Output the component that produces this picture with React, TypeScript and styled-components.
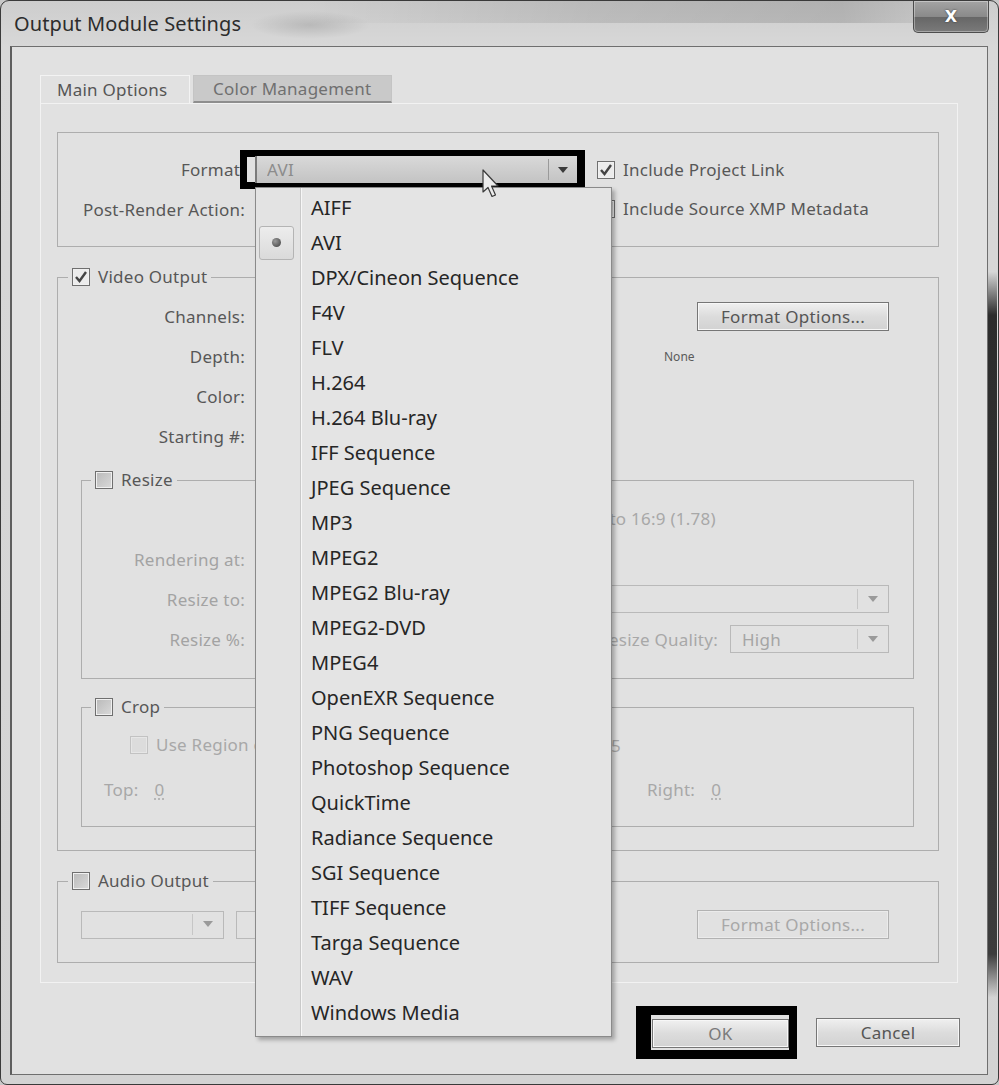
import React from 'react';
import styled, { createGlobalStyle } from 'styled-components';

const GlobalStyle = createGlobalStyle`
	* {
		box-sizing: border-box;
	}
	html,
	body {
		margin: 0;
		padding: 0;
		background: #c8c8c8;
	}
	body {
		font-family: 'Noto Sans', 'Open Sans', sans-serif;
		font-size: 17px;
		letter-spacing: 0.25px;
		color: #555;
	}
`;

// 창 전체
const Window = styled.div`
	width: 999px;
	height: 1085px;
	display: flex;
	flex-direction: column;
	padding: 0 10px 9px 9px;
	border: 1px solid #3a3a3a;
	border-radius: 9px 9px 7px 7px;
	overflow: hidden;
	background:
		linear-gradient(to bottom, transparent 25%, #2c2c2c 29%, #3c3c3c 88%, transparent 92%) right 1px top / 9px 100% no-repeat,
		linear-gradient(to bottom, #cdcdcd 0, #d8d8d8 46px, #d3d3d3 100%);
`;

const TitleBar = styled.div`
	height: 45px;
	display: flex;
	justify-content: space-between;
	align-items: flex-start;
	background:
		radial-gradient(ellipse 60px 14px at 300px 24px, rgba(0, 0, 0, 0.12), transparent),
		linear-gradient(to right, transparent 30%, rgba(0, 0, 0, 0.1) 60%, rgba(0, 0, 0, 0.14) 85%, transparent) top / 100% 22px no-repeat;
`;

const Title = styled.span`
	padding-left: 4px;
	line-height: 46px;
	font-size: 20px;
	letter-spacing: 0.1px;
	color: #2c2c2c;
`;

const CloseButton = styled.div`
	width: 76px;
	height: 32px;
	margin-right: -1px;
	display: flex;
	align-items: center;
	justify-content: center;
	border: 1px solid #4d4d4d;
	border-top: none;
	border-radius: 0 0 5px 5px;
	background: linear-gradient(to bottom, #a4a4a4, #8a8a8a 50%, #666 51%, #7a7a7a);
	box-shadow: inset 0 0 0 1px rgba(255, 255, 255, 0.35);
	color: #fff;
	font-family: 'DejaVu Sans', sans-serif;
	font-weight: bold;
	font-size: 16px;
	text-shadow: 0 0 2px #333;
`;

// 클라이언트 영역
const Client = styled.div`
	position: relative;
	flex: 1;
	padding: 28px 0 0 29px;
	border: 1px solid #6f6f6f;
	border-left: 2px solid #5e5e5e;
	background: #e1e1e1;
`;

const Tabs = styled.div`
	display: flex;
	height: 28px;
`;

const Tab = styled.div<{ $active?: boolean }>`
	display: flex;
	align-items: center;
	height: 28px;
	padding-left: ${(p) => (p.$active ? '16px' : '19px')};
	width: ${(p) => (p.$active ? '150px' : '199px')};
	margin-left: ${(p) => (p.$active ? '-1px' : '3px')};
	background: ${(p) => (p.$active ? '#e1e1e1' : '#c9c9c9')};
	border: 1px solid ${(p) => (p.$active ? '#f3f3f3' : '#c4c4c4')};
	border-bottom: ${(p) => (p.$active ? 'none' : '2px solid #8e8e8e')};
	color: ${(p) => (p.$active ? '#555' : '#707070')};
`;

const Panel = styled.div`
	width: 918px;
	height: 880px;
	margin-left: -1px;
	padding: 28px 18px 0 16px;
	border: 1px solid #f2f2f2;
	display: flex;
	flex-direction: column;
`;

// 포맷 영역
const FormatBox = styled.div`
	height: 115px;
	padding-top: 17px;
	border: 1px solid #adadad;
	display: grid;
	grid-template-columns: 187px 340px auto;
	grid-template-rows: 39px 40px;
	align-items: center;
`;

const Label = styled.span<{ $faint?: boolean }>`
	justify-self: end;
	color: ${(p) => (p.$faint ? '#a3a3a3' : '#575757')};
	white-space: nowrap;
`;

const Highlight = styled.div`
	position: relative;
	z-index: 2;
	width: 345px;
	height: 39px;
	margin-left: -5px;
	padding-left: 8px;
	border: 7px solid #000;
	border-right-width: 8px;
	background: #e1e1e1;
	display: flex;
	align-items: center;
`;

const FormatSelect = styled.div`
	flex: 1;
	height: 27px;
	display: flex;
	align-items: center;
	border-left: 2px solid #7a7a7a;
	background: linear-gradient(to bottom, #d9d9d9, #c3c3c3);
	color: #8c8c8c;
	padding-left: 10px;
`;

const Select = styled.div<{ $w: number; $faint?: boolean; $ml?: number }>`
	width: ${(p) => p.$w}px;
	height: 28px;
	margin-left: ${(p) => p.$ml ?? 0}px;
	flex: none;
	display: flex;
	align-items: center;
	border: 1px solid ${(p) => (p.$faint ? '#b9b9b9' : '#8c8c8c')};
	background: #e1e1e1;
	color: #a5a5a5;
`;

const SelectText = styled.span<{ $flush?: boolean }>`
	flex: 1;
	padding-left: ${(p) => (p.$flush ? 0 : 11)}px;
	white-space: nowrap;
	overflow: hidden;
`;

const Arrow = styled.span<{ $dark?: boolean }>`
	width: ${(p) => (p.$dark ? '29px' : '31px')};
	height: 80%;
	display: flex;
	align-items: center;
	justify-content: center;
	border-left: 1px solid ${(p) => (p.$dark ? '#9a9a9a' : '#c6c6c6')};

	&::after {
		content: '';
		border-left: 5px solid transparent;
		border-right: 5px solid transparent;
		border-top: 6px solid ${(p) => (p.$dark ? '#3a3a3a' : '#9a9a9a')};
	}
`;

const CheckRow = styled.label<{ $faint?: boolean; $ml?: number }>`
	display: flex;
	align-items: center;
	gap: 8px;
	height: 20px;
	line-height: 20px;
	margin-left: ${(p) => p.$ml ?? 0}px;
	color: ${(p) => (p.$faint ? '#a8a8a8' : '#575757')};
	white-space: nowrap;
`;

const Box = styled.span<{ $faint?: boolean; $checked?: boolean }>`
	width: 18px;
	height: 18px;
	flex: none;
	display: inline-flex;
	align-items: center;
	justify-content: center;
	border: 1px solid ${(p) => (p.$faint ? '#c2c2c2' : '#6f6f6f')};
	box-shadow: inset 0 0 0 1px ${(p) => (p.$faint ? '#e6e6e6' : '#f0f0f0')};
	background: ${(p) =>
		p.$checked ? '#ececec' : p.$faint ? '#dcdcdc' : 'linear-gradient(135deg, #b9b9b9, #dadada)'};
`;

// 그룹 박스
const Group = styled.fieldset<{ $h: number; $w?: number; $ml?: number; $mt: number }>`
	margin: ${(p) => p.$mt}px 0 0 ${(p) => p.$ml ?? 0}px;
	padding: 0;
	min-width: 0;
	width: ${(p) => (p.$w ? `${p.$w}px` : 'auto')};
	height: ${(p) => p.$h}px;
	border: 1px solid #adadad;
`;

const Legend = styled.legend<{ $ml: number }>`
	margin-left: ${(p) => p.$ml}px;
	padding: 0 4px;
	height: 20px;
	line-height: 20px;
`;

const VideoBody = styled.div`
	padding-top: 9px;
	display: grid;
	grid-template-columns: 187px 330px 1fr;
	grid-auto-rows: 40px;
	column-gap: 10px;
	align-items: center;
`;

const PushButton = styled.button<{ $faint?: boolean; $w: number; $tone?: string }>`
	width: ${(p) => p.$w}px;
	height: 29px;
	padding: 0;
	border: 1px solid ${(p) => (p.$faint ? '#b2b2b2' : '#767676')};
	background: ${(p) => (p.$faint ? '#e1e1e1' : 'linear-gradient(to bottom, #f0f0f0, #dcdcdc 50%, #d2d2d2)')};
	box-shadow: inset 0 0 0 1px ${(p) => (p.$faint ? '#ebebeb' : '#f7f7f7')};
	color: ${(p) => p.$tone ?? (p.$faint ? '#a8a8a8' : '#555')};
	font-family: inherit;
	font-size: 17px;
	letter-spacing: 0.3px;
`;

const FormatOptions = styled(PushButton)`
	justify-self: end;
	margin-right: 49px;
`;

const SmallNote = styled.span`
	margin-left: 69px;
	font-size: 12px;
	letter-spacing: 0;
	color: #5a5a5a;
`;

const ResizeBody = styled.div`
	padding-top: 9px;
	display: grid;
	grid-template-columns: 163px 1fr;
	grid-auto-rows: 40px;
	column-gap: 10px;
	align-items: center;
`;

const QualityRow = styled.div`
	display: flex;
	align-items: center;
	justify-content: flex-end;
	gap: 12px;
	padding-right: 24px;
	color: #a8a8a8;
`;

const CropBody = styled.div`
	padding-top: 18px;
	display: flex;
	flex-direction: column;
	gap: 23px;
`;

const RegionRow = styled.div`
	width: 491px;
	margin-left: 48px;
	height: 20px;
	display: flex;
	align-items: center;
	justify-content: space-between;
	color: #a8a8a8;
`;

const MarginRow = styled.div`
	margin-left: 22px;
	height: 20px;
	display: grid;
	grid-template-columns: repeat(4, 181px);
	align-items: center;
	color: #a8a8a8;
`;

const MarginValue = styled.span`
	margin-left: 16px;
	text-decoration: underline dotted;
	text-underline-offset: 3px;
`;

const AudioRow = styled.div`
	padding: 19px 49px 0 23px;
	display: flex;
	align-items: center;
	gap: 12px;

	& > button {
		margin-left: auto;
	}
`;

// 하단 버튼
const Footer = styled.div`
	margin-top: 23px;
	padding-right: 27px;
	display: flex;
	justify-content: flex-end;
	align-items: center;
	gap: 19px;
`;

const OkFrame = styled.div`
	padding: 4px 0 2px 1px;
	border: 9px solid #000;
	border-left-width: 15px;
	border-right-width: 8px;
	background: #e1e1e1;
`;

// 드롭다운 메뉴
const Menu = styled.ul`
	position: absolute;
	left: 243px;
	top: 140px;
	z-index: 5;
	width: 357px;
	height: 850px;
	margin: 0;
	padding: 2px 0 0;
	list-style: none;
	border: 1px solid #8a8a8a;
	box-shadow: 3px 3px 4px rgba(0, 0, 0, 0.28);
	background: linear-gradient(
		to right,
		#e3e3e3 0 44px,
		#c9c9c9 44px 45px,
		#f6f6f6 45px 46px,
		#e4e4e4 46px
	);
`;

const MenuItem = styled.li`
	height: 35px;
	display: flex;
	align-items: center;
	padding-left: 3px;
	font-size: 20px;
	letter-spacing: 0;
	color: #262626;
	white-space: nowrap;
`;

const Mark = styled.span<{ $on?: boolean }>`
	width: 35px;
	height: 34px;
	margin-right: 17px;
	flex: none;
	display: flex;
	align-items: center;
	justify-content: center;
	border-radius: 3px;
	border: 1px solid ${(p) => (p.$on ? '#b4b4b4' : 'transparent')};
	background: ${(p) => (p.$on ? 'linear-gradient(to bottom, #ededed, #dadada)' : 'transparent')};

	&::after {
		content: '';
		display: ${(p) => (p.$on ? 'block' : 'none')};
		width: 9px;
		height: 9px;
		border-radius: 50%;
		background: radial-gradient(circle at 35% 35%, #9a9a9a, #3c3c3c);
	}
`;

const Cursor = styled.svg`
	position: absolute;
	left: 470px;
	top: 122px;
	z-index: 6;
`;

const CheckMark = () => (
	<svg width="14" height="14" viewBox="0 0 14 14">
		<path d="M2 7 L5.5 11 L12 2" fill="none" stroke="#444" strokeWidth="2.4" />
	</svg>
);

const formats = [
	'AIFF',
	'AVI',
	'DPX/Cineon Sequence',
	'F4V',
	'FLV',
	'H.264',
	'H.264 Blu-ray',
	'IFF Sequence',
	'JPEG Sequence',
	'MP3',
	'MPEG2',
	'MPEG2 Blu-ray',
	'MPEG2-DVD',
	'MPEG4',
	'OpenEXR Sequence',
	'PNG Sequence',
	'Photoshop Sequence',
	'QuickTime',
	'Radiance Sequence',
	'SGI Sequence',
	'TIFF Sequence',
	'Targa Sequence',
	'WAV',
	'Windows Media',
];

const App = () => {
	return (
		<>
			<GlobalStyle />
			<Window>
				<TitleBar>
					<Title>Output Module Settings</Title>
					<CloseButton>X</CloseButton>
				</TitleBar>
				<Client>
					<Tabs>
						<Tab $active>Main Options</Tab>
						<Tab>Color Management</Tab>
					</Tabs>
					<Panel>
						<FormatBox>
							<Label>Format:</Label>
							<Highlight>
								<FormatSelect>
									<SelectText $flush>AVI</SelectText>
									<Arrow $dark />
								</FormatSelect>
							</Highlight>
							<CheckRow $ml={12}>
								<Box $checked>
									<CheckMark />
								</Box>
								Include Project Link
							</CheckRow>
							<Label>Post-Render Action:</Label>
							<Select $w={330} $ml={10}>
								<SelectText />
								<Arrow />
							</Select>
							<CheckRow $ml={12}>
								<Box />
								Include Source XMP Metadata
							</CheckRow>
						</FormatBox>

						<Group $mt={20} $h={584}>
							<Legend $ml={10}>
								<CheckRow>
									<Box $checked>
										<CheckMark />
									</Box>
									Video Output
								</CheckRow>
							</Legend>
							<VideoBody>
								<Label>Channels:</Label>
								<Select $w={330}>
									<SelectText />
									<Arrow />
								</Select>
								<FormatOptions $w={192}>Format Options...</FormatOptions>
								<Label>Depth:</Label>
								<Select $w={330}>
									<SelectText />
									<Arrow />
								</Select>
								<SmallNote>None</SmallNote>
								<Label>Color:</Label>
								<Select $w={330}>
									<SelectText />
									<Arrow />
								</Select>
								<span />
								<Label>Starting #:</Label>
								<Select $w={120}>
									<SelectText />
								</Select>
								<span />
							</VideoBody>

							<Group $mt={14} $ml={23} $w={833} $h={209}>
								<Legend $ml={9}>
									<CheckRow>
										<Box />
										Resize
									</CheckRow>
								</Legend>
								<ResizeBody>
									<span />
									<CheckRow $faint $ml={180}>
										<Box $faint />
										Lock Aspect Ratio to 16:9 (1.78)
									</CheckRow>
									<Label $faint>Rendering at:</Label>
									<span />
									<Label $faint>Resize to:</Label>
									<Select $w={634} $faint>
										<SelectText />
										<Arrow />
									</Select>
									<Label $faint>Resize %:</Label>
									<QualityRow>
										Resize Quality:
										<Select $w={159} $faint>
											<SelectText>High</SelectText>
											<Arrow />
										</Select>
									</QualityRow>
								</ResizeBody>
							</Group>

							<Group $mt={18} $ml={23} $w={833} $h={130}>
								<Legend $ml={9}>
									<CheckRow>
										<Box />
										Crop
									</CheckRow>
								</Legend>
								<CropBody>
									<RegionRow>
										<CheckRow $faint>
											<Box $faint />
											Use Region of Interest
										</CheckRow>
										<span>Size: 1920 x 1085</span>
									</RegionRow>
									<MarginRow>
										<span>
											Top:<MarginValue>0</MarginValue>
										</span>
										<span />
										<span />
										<span>
											Right:<MarginValue>0</MarginValue>
										</span>
									</MarginRow>
								</CropBody>
							</Group>
						</Group>

						<Group $mt={20} $h={92}>
							<Legend $ml={10}>
								<CheckRow>
									<Box />
									Audio Output
								</CheckRow>
							</Legend>
							<AudioRow>
								<Select $w={143} $faint>
									<SelectText />
									<Arrow />
								</Select>
								<Select $w={300} $faint>
									<SelectText />
									<Arrow />
								</Select>
								<PushButton $w={192} $faint>
									Format Options...
								</PushButton>
							</AudioRow>
						</Group>
					</Panel>

					<Footer>
						<OkFrame>
							<PushButton $w={137} $tone="#7a7a7a">
								OK
							</PushButton>
						</OkFrame>
						<PushButton $w={144}>Cancel</PushButton>
					</Footer>

					<Menu>
						{formats.map((f) => (
							<MenuItem key={f}>
								<Mark $on={f === 'AVI'} />
								{f}
							</MenuItem>
						))}
					</Menu>

					<Cursor width="19" height="29" viewBox="0 0 19 29">
						<path
							d="M1 1 L1 23 L6 18.5 L10 27.5 L13.5 26 L9.5 17 L16 17 Z"
							fill="#ececec"
							stroke="#3a3a3a"
							strokeWidth="1.2"
							strokeLinejoin="round"
						/>
					</Cursor>
				</Client>
			</Window>
		</>
	);
};

export default App;
